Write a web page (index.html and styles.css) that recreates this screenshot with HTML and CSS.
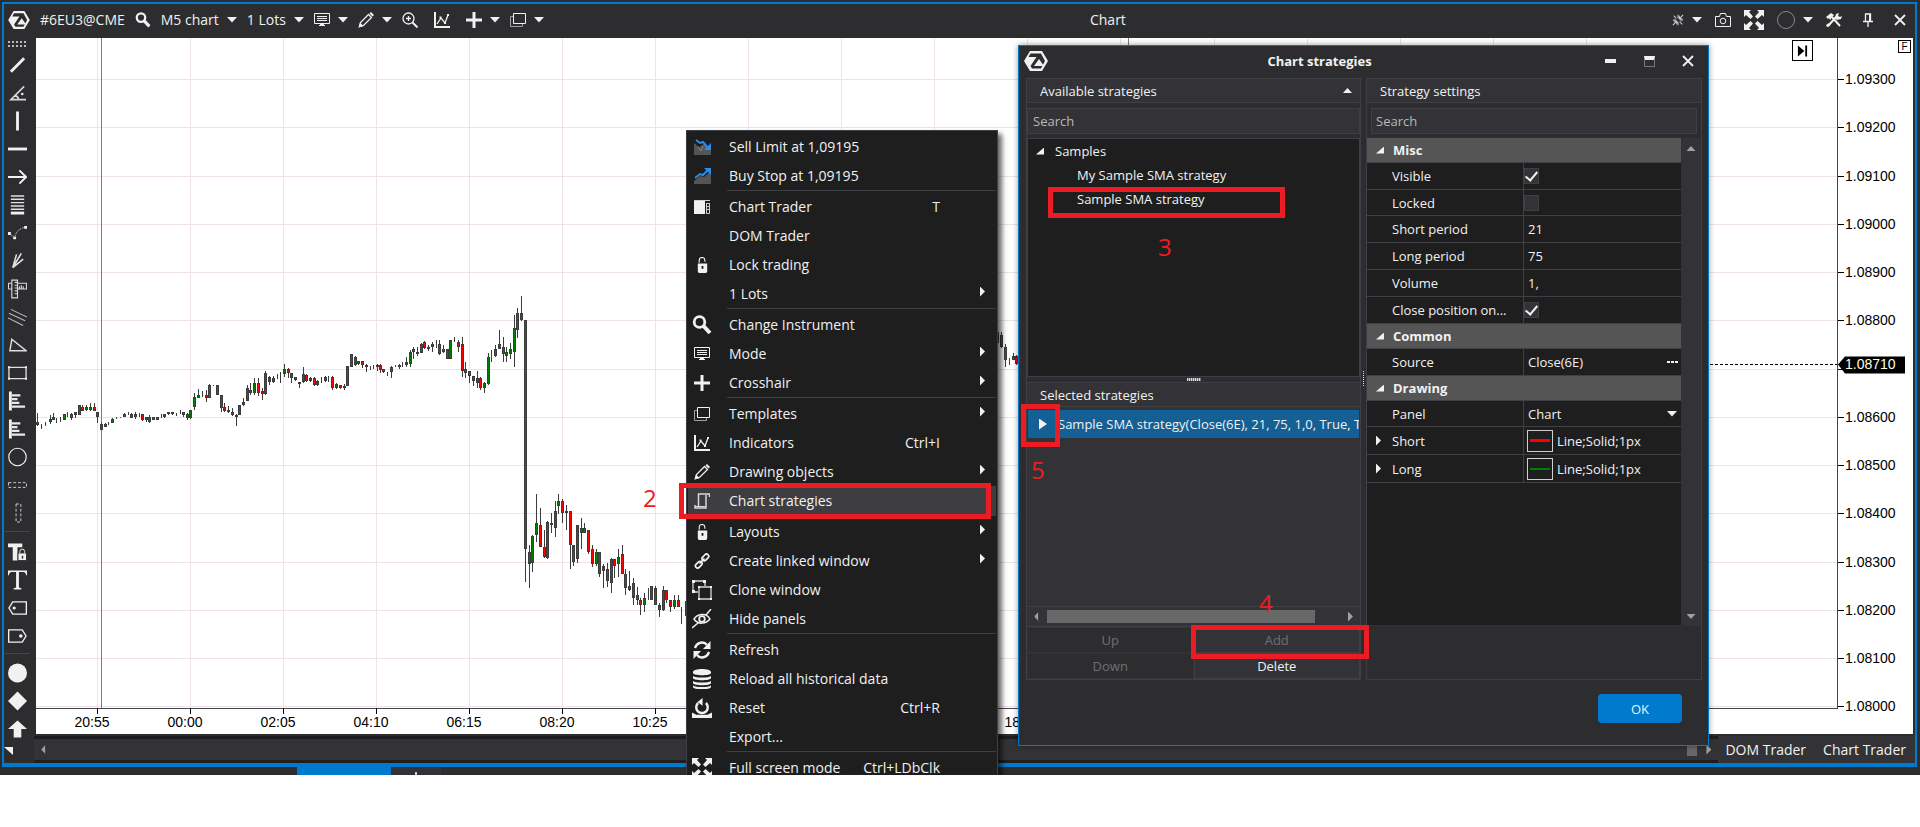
FILE: index.html
```html
<!DOCTYPE html>
<html lang="en">
<head>
<meta charset="utf-8">
<title>Chart</title>
<link rel="stylesheet" href="styles.css">
</head>
<body>
<svg class="sprite" aria-hidden="true">
  <symbol id="i-logo" viewBox="0 0 24 20"><path fill="#f1f1f1" d="M6 0h12l6 10-6 10H6L0 10z"/><path fill="#2d2d30" d="M6.500 2.500h10.500L21 10l-4 7.500H8l-1.500-2.500L12.500 6H4.500z"/><path fill="#f1f1f1" d="M15 8l5 7H10z"/></symbol>
  <symbol id="i-search" viewBox="0 0 20 20"><circle cx="7.500" cy="7" r="5.300" fill="none" stroke="#f1f1f1" stroke-width="2.800"/><path d="M11.500 11l6.500 7" stroke="#f1f1f1" stroke-width="4"/></symbol>
  <symbol id="i-down" viewBox="0 0 10 6"><path fill="#f1f1f1" d="M0 0h10L5 5.500z"/></symbol>
  <symbol id="i-monitor" viewBox="0 0 16 14"><path fill="none" stroke="#f1f1f1" d="M.5.500h15v10H.5z"/><path stroke="#f1f1f1" d="M3 3.500h10M3 5.500h10M3 7.500h10M5 12.500h6"/><path fill="#f1f1f1" d="M6 11h4v2H6z"/></symbol>
  <symbol id="i-pencil" viewBox="0 0 16 16"><path fill="none" stroke="#f1f1f1" stroke-width="1.300" d="M1.500 14.500l1-4L10.500 2.500l3 3L5.500 13.500z"/><path fill="#f1f1f1" d="M.5 15.500l1.500-5 3.500 3.500zM11.500 1.500L13 0l3 3-1.500 1.500z"/></symbol>
  <symbol id="i-zoom" viewBox="0 0 16 16"><circle cx="6.500" cy="6.500" r="5.500" fill="none" stroke="#f1f1f1" stroke-width="1.300"/><path d="M10.500 10.500l5 5" stroke="#f1f1f1" stroke-width="2"/><path d="M4 6.500h5M6.500 4v5" stroke="#f1f1f1" stroke-width="1.300"/></symbol>
  <symbol id="i-graph" viewBox="0 0 16 16"><path d="M1 0v15h15" fill="none" stroke="#f1f1f1" stroke-width="2"/><path d="M3 12l4-6 4 5 3-8" fill="none" stroke="#f1f1f1" stroke-width="1.300"/><path d="M5.500 4.500h2v2h-2zM10 10h2v2h-2zM13 2h2v2h-2z" fill="#f1f1f1"/></symbol>
  <symbol id="i-plus" viewBox="0 0 16 16"><path d="M8 0v16M0 8h16" stroke="#f1f1f1" stroke-width="3"/></symbol>
  <symbol id="i-pages" viewBox="0 0 16 14"><path fill="none" stroke="#f1f1f1" d="M3.500.500h12v10h-12z"/><path fill="none" stroke="#a0a0a0" d="M3 3.500H.5v10h12V11"/></symbol>
  <symbol id="i-collapse" viewBox="0 0 14 14"><path stroke="#d0d0d0" stroke-width="1.200" fill="none" d="M1 13l4-4M13 1L9 5M2 2l3 3M12 12L9 9M7 1v4M7 9v4M1 7h4M9 7h4M5.500 12V8.500H2M8.500 2v3.500H12"/></symbol>
  <symbol id="i-camera" viewBox="0 0 16 14"><path fill="none" stroke="#f1f1f1" d="M.5 3.500h4l1-3h5l1 3h4v10H.5z"/><circle cx="8" cy="8" r="2.800" fill="none" stroke="#f1f1f1"/></symbol>
  <symbol id="i-expand" viewBox="0 0 20 20"><path fill="#f1f1f1" d="M0 0h7L5 2l4 4.500L6.500 9 2 5 0 7zM20 0v7l-2-2-4.500 4L11 6.500 15 2l-2-2zM0 20v-7l2 2 4.500-4L9 13.500 5 18l2 2zM20 20h-7l2-2-4-4.500 2.500-2.500 4.500 4 2-2z"/></symbol>
  <symbol id="i-ring" viewBox="0 0 18 18"><circle cx="9" cy="9" r="8.500" fill="none" stroke="#8a8a8a"/></symbol>
  <symbol id="i-tools" viewBox="0 0 16 14"><path stroke="#f1f1f1" stroke-width="2" d="M2 13l9-10M6 4l8 9"/><path fill="#f1f1f1" d="M0 4l5-4 3 2-4 5-1-2-1 1zM10 1l3-1-1 3 2 1 2-1-1 3-4 1-2-2zM0 12l3-2 1 3-3 1z"/></symbol>
  <symbol id="i-pin" viewBox="0 0 10 14"><path fill="none" stroke="#f1f1f1" stroke-width="1.300" d="M2.500 8V1h5v7M0 8.500h10M5 9v5"/><path stroke="#f1f1f1" stroke-width="2" d="M7 1v7"/></symbol>
  <symbol id="i-close" viewBox="0 0 12 12"><path stroke="#f1f1f1" stroke-width="1.800" d="M1 1l10 10M11 1L1 11"/></symbol>
  <symbol id="i-lock" viewBox="0 0 12 17"><path fill="none" stroke="#f1f1f1" stroke-width="1.200" d="M2.500 6V3.500a3 3 0 016 0V5"/><path fill="#f1f1f1" fill-rule="evenodd" d="M1 7h10v8.500L10 17H2l-1-1.500zM5 9.500v3h2v-3z"/></symbol>
  <symbol id="i-panel" viewBox="0 0 16 14"><path fill="#f1f1f1" d="M0 1h11v13H0z"/><path stroke="#d0d0d0" fill="none" d="M0 .5h16M12 3.500h4M12.500 3v10.500h3V3M13 6.500h3M13 9.500h3"/></symbol>
  <symbol id="i-fall" viewBox="0 0 17 16"><path fill="#555" d="M0 4l5 4 5-3 7 5v6H0z"/><path stroke="#999" stroke-width=".7" fill="none" d="M4 8l3 4 2-5"/><path fill="none" stroke="#2d8ceb" stroke-width="2" d="M2 1l4 3 3-1 5 6"/><path fill="#2d8ceb" d="M17 4v7h-7z"/></symbol>
  <symbol id="i-rise" viewBox="0 0 17 16"><path fill="#555" d="M0 13l6-5 4 1 7-6v13H0z"/><path fill="none" stroke="#2d8ceb" stroke-width="2" d="M1 10l5-4 3 1 5-5"/><path fill="#2d8ceb" d="M10 0h7v7z"/></symbol>
  <symbol id="i-scroll" viewBox="0 0 16 16"><path fill="none" stroke="#d8d8d8" stroke-width="1.500" d="M15.500 4V1H4.500v12.500M1 12v3h11V2"/><path fill="none" stroke="#d8d8d8" d="M1 13.500h10"/></symbol>
  <symbol id="i-link" viewBox="0 0 16 16"><g fill="none" stroke="#f1f1f1" stroke-width="1.700"><rect x="-3.800" y="-2" width="7.600" height="4.400" rx="2.200" transform="translate(4.600 11.600) rotate(-45)"/><rect x="-3.800" y="-2.400" width="7.600" height="4.400" rx="2.200" transform="translate(11.500 4.600) rotate(-45)"/><path d="M5.500 10.500l5-5"/></g></symbol>
  <symbol id="i-clone" viewBox="0 0 20 20"><path fill="none" stroke="#d8d8d8" stroke-width="1.300" d="M6 12H1V1h12v5M7 7h12v12H7z"/><path fill="#f1f1f1" d="M0 0h3v3H0zM11 0h3v3h-3zM0 10h3v3H0zM6 6h2v2H6zM18 6h2v2h-2zM6 18h2v2H6zM18 18h2v2h-2z"/></symbol>
  <symbol id="i-eye" viewBox="0 0 20 20"><path fill="none" stroke="#f1f1f1" stroke-width="1.500" d="M2 10c3-5 12-7 16 0-4 5-12 6-16 0zM0 19l6-5M14 6l5-6"/><circle cx="10" cy="10" r="2.800" fill="none" stroke="#f1f1f1" stroke-width="1.800"/></symbol>
  <symbol id="i-refresh" viewBox="0 0 18 18"><path fill="none" stroke="#f1f1f1" stroke-width="2.400" d="M2 7c2-6 9-7 12-3M16 11c-2 6-9 7-12 3"/><path fill="#f1f1f1" d="M17.500 0v8H10zM.5 18v-8H8z"/></symbol>
  <symbol id="i-db" viewBox="0 0 18 20"><path fill="#f1f1f1" d="M0 3c0-4 18-4 18 0v1c0 3-18 3-18 0zM0 7c3 2 15 2 18 0v2c0 3-18 3-18 0zM0 12c3 2 15 2 18 0v2c0 3-18 3-18 0zM0 16.500c3 2 15 2 18 0V18c0 3-18 3-18 0z"/></symbol>
  <symbol id="i-reset" viewBox="0 0 18 18"><path fill="none" stroke="#f1f1f1" stroke-width="2.200" d="M5.500 4.500a5.200 5.200 0 107 0"/><path fill="#f1f1f1" d="M9.500 0v7L5 3.500zM0 13l4 2h10l4-2v5H0z"/></symbol>
  <symbol id="r-line" viewBox="0 0 20 20"><path d="M3 17L17 3" stroke="#f1f1f1" stroke-width="3"/></symbol>
  <symbol id="r-angle" viewBox="0 0 20 20"><path d="M17 3L3 17h16M7 13c3 0 4 2 4 4" fill="none" stroke="#d8d8d8" stroke-width="1.700"/><circle cx="15" cy="11" r="1.300" fill="#f1f1f1"/></symbol>
  <symbol id="r-v" viewBox="0 0 20 20"><path d="M10 0v20" stroke="#f1f1f1" stroke-width="3"/></symbol>
  <symbol id="r-h" viewBox="0 0 20 20"><path d="M0 10h20" stroke="#f1f1f1" stroke-width="3"/></symbol>
  <symbol id="r-arrow" viewBox="0 0 20 20"><path d="M0 10h18M12 3l7 7-7 7" fill="none" stroke="#f1f1f1" stroke-width="2"/></symbol>
  <symbol id="r-fib" viewBox="0 0 20 20"><path d="M3 .5h14M3 4h14M3 7.500h14M3 11h14M3 14.500h14" stroke="#e0e0e0" stroke-width="1.500"/><path d="M3 18.500h14" stroke="#f1f1f1" stroke-width="3"/></symbol>
  <symbol id="r-curve" viewBox="0 0 20 20"><path d="M1 10l6 5c1-6 5-10 11-11" fill="none" stroke="#bbb" stroke-dasharray="2 1"/><path d="M0 9h3v3H0zM5.500 14h3v2.500h-3zM17 2.500h3v3h-3z" fill="#f1f1f1"/></symbol>
  <symbol id="r-fan" viewBox="0 0 20 20"><path d="M5 17L9 3M5 17l9-15M5 17l11-9" stroke="#e0e0e0" stroke-width="1.700"/></symbol>
  <symbol id="r-ruler" viewBox="0 0 20 20"><path d="M4 .7h6v18.600H4zM10 4h9.500v6H10M4 4H.5v6H4M7 3h3M7 6h3M7 9h3M7 12h3M7 15h3M12 7v3M14 6v4M16 7v3" fill="none" stroke="#d8d8d8" stroke-width="1.200"/></symbol>
  <symbol id="r-chan" viewBox="0 0 20 20"><path d="M3 2l17 8M1 6l17 8M0 11l16 8" stroke="#bbb" stroke-width="1.100"/></symbol>
  <symbol id="r-tri" viewBox="0 0 20 20"><path d="M4 4l15 12H2z" fill="none" stroke="#e0e0e0" stroke-width="1.500"/></symbol>
  <symbol id="r-rect" viewBox="0 0 20 20"><path d="M1 4h18v12H1z" fill="none" stroke="#e0e0e0" stroke-width="1.400"/><path d="M0 3h2v2H0zM18 3h2v2h-2zM0 15h2v2H0zM18 15h2v2h-2z" fill="#f1f1f1"/></symbol>
  <symbol id="r-prof" viewBox="0 0 20 20"><path d="M2.500 0v20" stroke="#f1f1f1" stroke-width="3"/><path d="M4 4h9M4 8h6M4 12h8M4 16h14" stroke="#e8e8e8" stroke-width="2.400"/></symbol>
  <symbol id="r-ring" viewBox="0 0 20 20"><circle cx="10" cy="10" r="9.200" fill="none" stroke="#f1f1f1" stroke-width="1.200"/></symbol>
  <symbol id="r-dh" viewBox="0 0 20 20"><path d="M.5 7.500h19v5H.5z" fill="none" stroke="#d0d0d0" stroke-dasharray="3 2"/></symbol>
  <symbol id="r-dv" viewBox="0 0 20 20"><path d="M8.500.500h5v19h-5z" fill="none" stroke="#d0d0d0" stroke-dasharray="3 2"/></symbol>
  <symbol id="r-tlock" viewBox="0 0 20 20"><path d="M0 1h15v4H10v14H5V5H0z" fill="#f1f1f1"/><path d="M10.500 11h9v8h-9z" fill="#f1f1f1" stroke="#2d2d30"/><path d="M12.500 11V9.500a2.500 2.500 0 015 0V11" fill="none" stroke="#f1f1f1"/><path d="M14.500 14h1.500v3h-1.500z" fill="#2d2d30"/></symbol>
  <symbol id="r-t" viewBox="0 0 20 20"><path d="M0 0h20v5h-1c0-2-1-3.500-3-3.500h-4.500V18l2.500.8V20H6v-1.200l2.500-.8V1.500H4C2 1.500 1 3 1 5H0z" fill="#f1f1f1"/></symbol>
  <symbol id="r-tagl" viewBox="0 0 20 20"><path d="M5 3.500h14.300v13H5L1 10z" fill="none" stroke="#f1f1f1" stroke-width="1.400"/><circle cx="6.500" cy="10" r="1.700" fill="#f1f1f1"/></symbol>
  <symbol id="r-tagr" viewBox="0 0 20 20"><path d="M15 3.500H.7v13H15l4-6.500z" fill="none" stroke="#f1f1f1" stroke-width="1.400"/><circle cx="13.500" cy="10" r="1.900" fill="#f1f1f1"/></symbol>
  <symbol id="r-dot" viewBox="0 0 20 20"><circle cx="10" cy="10" r="10" fill="#f1f1f1"/></symbol>
  <symbol id="r-dia" viewBox="0 0 20 20"><path d="M10 0l10 10-10 10L0 10z" fill="#f1f1f1"/></symbol>
  <symbol id="r-up" viewBox="0 0 20 20"><path d="M10 1l10 9h-6v9H6v-9H0z" fill="#f1f1f1"/></symbol>
</svg>

<div class="app">
  <div class="frame">
    <header class="titlebar">
      <div class="tools">
        <svg class="ic logo"><use href="#i-logo"/></svg>
        <span class="symbol">#6EU3@CME</span>
        <button class="tb" aria-label="Find instrument"><svg class="ic s16"><use href="#i-search"/></svg></button>
        <button class="tb wide">M5 chart<svg class="caret"><use href="#i-down"/></svg></button>
        <button class="tb wide">1 Lots<svg class="caret"><use href="#i-down"/></svg></button>
        <button class="tb" aria-label="Mode"><svg class="ic s16"><use href="#i-monitor"/></svg><svg class="caret"><use href="#i-down"/></svg></button>
        <button class="tb" aria-label="Draw"><svg class="ic s16"><use href="#i-pencil"/></svg><svg class="caret"><use href="#i-down"/></svg></button>
        <button class="tb" aria-label="Zoom"><svg class="ic s16"><use href="#i-zoom"/></svg></button>
        <button class="tb gap" aria-label="Indicators"><svg class="ic s16"><use href="#i-graph"/></svg></button>
        <button class="tb gap" aria-label="Crosshair"><svg class="ic s16"><use href="#i-plus"/></svg><svg class="caret"><use href="#i-down"/></svg></button>
        <button class="tb" aria-label="Templates"><svg class="ic s16"><use href="#i-pages"/></svg><svg class="caret"><use href="#i-down"/></svg></button>
      </div>
      <h1 class="title">Chart</h1>
      <div class="tools right">
        <button class="tb" aria-label="Collapse"><svg class="ic s12"><use href="#i-collapse"/></svg><svg class="caret"><use href="#i-down"/></svg></button>
        <button class="tb" aria-label="Snapshot"><svg class="ic s16"><use href="#i-camera"/></svg></button>
        <button class="tb" aria-label="Full screen"><svg class="ic s20"><use href="#i-expand"/></svg></button>
        <button class="tb" aria-label="Colour"><svg class="ic s18"><use href="#i-ring"/></svg><svg class="caret"><use href="#i-down"/></svg></button>
        <button class="tb" aria-label="Settings"><svg class="ic s16"><use href="#i-tools"/></svg></button>
        <button class="tb far" aria-label="Pin"><svg class="ic s14"><use href="#i-pin"/></svg></button>
        <button class="tb far" aria-label="Close"><svg class="ic s12"><use href="#i-close"/></svg></button>
      </div>
    </header>

    <div class="main">
      <nav class="rail" id="rail" aria-label="Drawing tools"></nav>
      <div class="work">
        <div class="chart">
          <svg class="plot" id="plot" role="img" aria-label="Price chart"></svg>
          <svg class="axis" id="axis" role="img" aria-label="Price scale"></svg>
          <button class="jump" aria-label="Go to last bar"><svg viewBox="0 0 12 12"><path d="M1 0l7 6-7 6zM9 0h2v12H9z"/></svg></button>
          <button class="fix">F</button>
        </div>
        <div class="foot">
          <div class="hscroll"><span class="tri left"></span><span class="hthumb"></span><span class="tri rightward"></span></div>
          <div class="tabs"><button>DOM Trader</button><button>Chart Trader</button></div>
        </div>
      </div>
    </div>
  </div>
  <div class="strip"><span class="active"></span><span class="new"></span></div>

  <menu class="ctx">
    <li><button><svg class="m17"><use href="#i-fall"/></svg><span>Sell Limit at 1,09195</span></button></li>
    <li><button><svg class="m17"><use href="#i-rise"/></svg><span>Buy Stop at 1,09195</span></button></li>
    <li class="sep"></li>
    <li><button><svg class="m16"><use href="#i-panel"/></svg><span>Chart Trader</span><kbd>T</kbd></button></li>
    <li><button><i></i><span>DOM Trader</span></button></li>
    <li><button><svg class="m17"><use href="#i-lock"/></svg><span>Lock trading</span></button></li>
    <li><button><i></i><span>1 Lots</span><b></b></button></li>
    <li class="sep"></li>
    <li><button><svg class="m20"><use href="#i-search"/></svg><span>Change Instrument</span></button></li>
    <li><button><svg class="m16"><use href="#i-monitor"/></svg><span>Mode</span><b></b></button></li>
    <li><button><svg class="m16"><use href="#i-plus"/></svg><span>Crosshair</span><b></b></button></li>
    <li class="sep"></li>
    <li><button><svg class="m16"><use href="#i-pages"/></svg><span>Templates</span><b></b></button></li>
    <li><button><svg class="m16"><use href="#i-graph"/></svg><span>Indicators</span><kbd>Ctrl+I</kbd></button></li>
    <li><button><svg class="m16"><use href="#i-pencil"/></svg><span>Drawing objects</span><b></b></button></li>
    <li><button class="hot"><svg class="m16"><use href="#i-scroll"/></svg><span>Chart strategies</span></button></li>
    <li class="sep"></li>
    <li><button><svg class="m17"><use href="#i-lock"/></svg><span>Layouts</span><b></b></button></li>
    <li><button><svg class="m16"><use href="#i-link"/></svg><span>Create linked window</span><b></b></button></li>
    <li><button><svg class="m20"><use href="#i-clone"/></svg><span>Clone window</span></button></li>
    <li><button><svg class="m20"><use href="#i-eye"/></svg><span>Hide panels</span></button></li>
    <li class="sep"></li>
    <li><button><svg class="m18"><use href="#i-refresh"/></svg><span>Refresh</span></button></li>
    <li><button><svg class="m20"><use href="#i-db"/></svg><span>Reload all historical data</span></button></li>
    <li><button><svg class="m20"><use href="#i-reset"/></svg><span>Reset</span><kbd>Ctrl+R</kbd></button></li>
    <li><button><i></i><span>Export...</span></button></li>
    <li class="sep"></li>
    <li><button><svg class="m20"><use href="#i-expand"/></svg><span>Full screen mode</span><kbd>Ctrl+LDbClk</kbd></button></li>
  </menu>

  <section class="dialog" role="dialog" aria-labelledby="dlg-title">
    <header class="dlg-bar">
      <svg class="dlg-logo"><use href="#i-logo"/></svg>
      <h2 id="dlg-title">Chart strategies</h2>
      <div class="win">
        <button aria-label="Minimize"><span class="min"></span></button>
        <button aria-label="Maximize"><span class="max"></span></button>
        <button aria-label="Close"><svg class="s12"><use href="#i-close"/></svg></button>
      </div>
    </header>
    <div class="cols">
      <div class="left">
        <div class="head"><span>Available strategies</span><span class="tri up"></span></div>
        <input class="search" type="text" placeholder="Search" aria-label="Search strategies">
        <ul class="tree">
          <li class="root"><span class="corner"></span>Samples</li>
          <li>My Sample SMA strategy</li>
          <li>Sample SMA strategy</li>
        </ul>
        <div class="grip"><span></span></div>
        <div class="selected">
          <div class="head sub"><span>Selected strategies</span></div>
          <div class="entry"><button aria-label="Start strategy"><span class="play"></span></button><span>Sample SMA strategy(Close(6E), 21, 75, 1,0, True, T</span></div>
          <div class="space"></div>
          <div class="list-scroll"><span class="tri left"></span><span class="thumb"></span><span class="tri rightward"></span></div>
          <div class="cmds">
            <button disabled>Up</button><button disabled class="raised">Add</button>
            <button disabled>Down</button><button class="raised">Delete</button>
          </div>
        </div>
      </div>
      <div class="settings">
        <div class="head"><span>Strategy settings</span></div>
        <input class="search inset" type="text" placeholder="Search" aria-label="Search settings">
        <div class="grid-wrap">
          <div class="grid">
            <div class="cat"><span class="corner"></span>Misc</div>
            <div class="prop"><label for="p1">Visible</label><div><input type="checkbox" id="p1" checked></div></div>
            <div class="prop tight"><label for="p2">Locked</label><div><input type="checkbox" id="p2"></div></div>
            <div class="prop"><label for="p3">Short period</label><div><input type="text" id="p3" value="21"></div></div>
            <div class="prop"><label for="p4">Long period</label><div><input type="text" id="p4" value="75"></div></div>
            <div class="prop"><label for="p5">Volume</label><div><input type="text" id="p5" value="1,"></div></div>
            <div class="prop"><label for="p6">Close position on...</label><div><input type="checkbox" id="p6" checked></div></div>
            <div class="cat"><span class="corner"></span>Common</div>
            <div class="prop"><label for="p7">Source</label><div><input type="text" id="p7" value="Close(6E)"><button class="more" aria-label="Choose source"><span></span><span></span><span></span></button></div></div>
            <div class="cat"><span class="corner"></span>Drawing</div>
            <div class="prop tight"><label for="p8">Panel</label><div class="pick"><select id="p8"><option>Chart</option></select><svg class="caret"><use href="#i-down"/></svg></div></div>
            <div class="prop tall"><span class="tri open"></span><span class="name">Short</span><div><span class="swatch red"></span>Line;Solid;1px</div></div>
            <div class="prop tall"><span class="tri open"></span><span class="name">Long</span><div><span class="swatch green"></span>Line;Solid;1px</div></div>
          </div>
          <div class="vscroll"><span class="tri up"></span><span class="tri down"></span></div>
        </div>
        <div class="desc"></div>
      </div>
      <span class="side-grip"></span>
    </div>
    <footer class="dlg-foot"><button class="ok">OK</button></footer>
  </section>

  <div class="box box-menu"></div><span class="num num-menu">2</span>
  <div class="box box-tree"></div><span class="num num-tree">3</span>
  <div class="box box-add"></div><span class="num num-add">4</span>
  <div class="box box-play"></div><span class="num num-play">5</span>
</div>
<script src="chart.js"></script>
</body>
</html>
```
FILE: styles.css
```css
* { box-sizing: border-box; }
body { margin: 0; background: #fff; font: 14px/20px "Open Sans", "Noto Sans", sans-serif; color: #f1f1f1; }
button, input, select { font: inherit; color: inherit; background: none; border: 0; padding: 0; margin: 0; }
svg, span { flex-shrink: 0; }
.sprite { display: none; }

.app { position: relative; overflow: hidden; background: #2d2d30; padding: 2px 3px 0 2px; }
.frame { border: 2px solid #007acc; border-bottom-width: 4px; }

.titlebar { display: flex; align-items: center; height: 34px; padding: 0 9px 2px 4px; }
.title { flex: 1; text-align: center; font-size: 14px; font-weight: 400; margin: 0; }
.tools { display: flex; align-items: center; gap: 10px; }
.tools.right { gap: 13px; }
.tb { display: flex; align-items: center; gap: 8px; white-space: nowrap; }
.tb.gap { margin-left: 6px; }
.tb.far { margin-left: 8px; }
.logo { width: 22px; height: 18px; }
.s12 { width: 12px; height: 12px; }
.s14 { width: 10px; height: 14px; }
.s16 { width: 16px; height: 16px; }
.s18 { width: 18px; height: 18px; }
.s20 { width: 20px; height: 20px; }
.caret { width: 10px; height: 6px; }

.main { display: flex; }
.rail { width: 30px; flex: none; display: flex; flex-direction: column; align-items: center; padding-right: 4px; }
.rail .dots { width: 20px; height: 7px; margin: 2px 0 4px; background: radial-gradient(circle, #bbb 1px, transparent 1px) 0 0 / 4px 4px; }
.rail button { height: 28px; display: flex; align-items: center; }
.rail svg { width: 19px; height: 20px; }
.rail hr { width: 25px; margin: 4px 0 6px; border: 0; border-top: 1px solid #46464a; }
.rail hr.last { margin: 3px 0 5px; }
.rail .fold { align-self: flex-start; width: 9px; height: 8px; margin-top: 4px; background: #f1f1f1; clip-path: polygon(0 0, 100% 0, 100% 100%); }

.work { flex: 1; min-width: 0; }
.chart { position: relative; display: flex; margin: 0 2px; background: #fff; }
.plot { flex: 1; min-width: 0; height: 696px; }
.axis { width: 76px; height: 696px; }
.plot text, .axis text { font: 14px "Liberation Sans", Arial, sans-serif; fill: #000; }
.axis .now { fill: #ffffe1; }
.jump { position: absolute; right: 100px; top: 2px; width: 21px; height: 21px; border: 1px solid #000; display: grid; place-items: center; }
.jump svg { width: 11px; height: 12px; }
.fix { position: absolute; right: 2px; top: 2px; width: 13px; height: 13px; border: 1px solid #000; color: #000; font: 10px/11px "Liberation Sans", sans-serif; }

.foot { display: flex; padding-top: 2px; }
.hscroll { flex: 1; display: flex; align-items: center; height: 27px; padding: 0 7px; border: solid #1e1e1e; border-width: 3px 0; background: #333337; }
.hthumb { width: 10px; height: 12px; margin-left: auto; margin-right: 9px; background: #686868; }
.tabs { display: flex; gap: 17px; padding: 0 9px 0 7px; background: #333337; }
.strip { display: flex; height: 8px; padding-left: 295px; }
.strip .active { width: 94px; background: #007acc; }
.strip .new { width: 50px; background: linear-gradient(#ccc, #ccc) 24px 5px / 2px 3px no-repeat #333337; }

.tri { width: 5px; height: 10px; background: #a0a0a0; }
.tri.left { clip-path: polygon(100% 0, 100% 100%, 0 50%); }
.tri.rightward, .tri.open { clip-path: polygon(0 0, 100% 50%, 0 100%); }
.tri.up { width: 9px; height: 5px; clip-path: polygon(50% 0, 100% 100%, 0 100%); }
.tri.down { width: 9px; height: 5px; clip-path: polygon(0 0, 100% 0, 50% 100%); }

.ctx { position: absolute; left: 686px; top: 130px; width: 312px; margin: 0; padding: 1px; list-style: none; background: #1e1e1e; border: 1px solid #3f3f46; box-shadow: 4px 4px 5px rgba(0, 0, 0, .6); }
.ctx button { display: grid; grid-template-columns: 28px 13px auto 1fr 56px; align-items: center; width: 100%; height: 29px; text-align: left; }
.ctx svg, .ctx i { grid-column: 1; justify-self: center; height: 16px; }
.ctx span { grid-column: 3; white-space: nowrap; }
.ctx kbd { grid-column: 4; justify-self: end; font: inherit; }
.ctx b { grid-column: 5; justify-self: end; width: 5px; height: 10px; margin: 0 11px 4px 0; background: #f1f1f1; clip-path: polygon(0 0, 100% 50%, 0 100%); }
.ctx .m16 { width: 16px; }
.ctx .m17 { width: 17px; }
.ctx .m18 { width: 18px; height: 18px; }
.ctx .m20 { width: 20px; height: 20px; }
.ctx .sep { height: 2px; margin-left: 39px; border-top: 1px solid #3f3f46; }
.ctx .hot { background: #3e3e42; }

.dialog { position: absolute; left: 1018px; top: 45px; width: 691px; border: 1px solid #007acc; background: #2d2d30; font-size: 13px; box-shadow: 0 0 6px rgba(0, 0, 0, .4); }
.dlg-bar { display: flex; align-items: center; height: 32px; padding: 0 14px 2px 5px; }
.dlg-logo { width: 24px; height: 20px; }
.dlg-bar h2 { flex: 1; margin: 0; padding-right: 13px; text-align: center; font-size: 13px; font-weight: 700; }
.win { display: flex; gap: 27px; }
.win button { width: 12px; height: 12px; display: grid; place-items: center; }
.min { width: 11px; height: 4px; background: #f1f1f1; }
.max { width: 11px; height: 11px; border: 1px solid #777; border-top: 4px solid #f1f1f1; }
.cols { position: relative; display: grid; grid-template-columns: 335px 336px; gap: 5px; padding: 0 7px; }
.left, .settings { min-width: 0; border: 1px solid #3f3f46; }
.settings { display: flex; flex-direction: column; }
.left { display: flex; flex-direction: column; }
.head { display: flex; align-items: center; justify-content: space-between; height: 24px; padding: 0 8px 0 13px; background: #333337; border-bottom: 1px solid #3f3f46; }
.head .tri { background: #f1f1f1; }
.search { height: 26px; margin: 5px 0 4px; padding: 0 5px; border: 1px solid #3f3f46; background: #333337; }
.search.inset { margin: 5px 4px 4px; padding: 0 4px; }
.search::placeholder { color: #b8b8b8; opacity: 1; }
.tree { height: 239px; margin: 0; padding: 0; list-style: none; background: #1e1e1e; border: 1px solid #3f3f46; }
.tree li { height: 24px; line-height: 24px; padding-left: 49px; }
.tree .root { display: flex; align-items: center; gap: 11px; padding-left: 8px; }
.corner { width: 8px; height: 7px; background: #f1f1f1; clip-path: polygon(100% 0, 100% 100%, 0 100%); }
.grip { height: 5px; display: grid; place-items: center; }
.grip span { width: 14px; height: 3px; background: repeating-linear-gradient(90deg, #ddd 0 1px, #777 1px 2px); }
.side-grip { position: absolute; left: 344px; top: 293px; width: 1px; height: 15px; background: repeating-linear-gradient(#ddd 0 1px, #2d2d30 1px 2px); }
.selected { background: #333337; border-top: 1px solid #3f3f46; }
.entry { display: flex; align-items: center; height: 28px; margin: 3px 1px 0; overflow: hidden; white-space: nowrap; background: #146095; }
.entry button { flex: none; width: 30px; height: 28px; display: grid; place-items: center; }
.play { width: 8px; height: 11px; background: #f1f1f1; clip-path: polygon(0 0, 100% 50%, 0 100%); }
.space { height: 168px; }
.list-scroll { display: flex; align-items: center; height: 21px; padding: 0 7px; border-top: 1px solid #3f3f46; border-bottom: 1px solid #3f3f46; }
.list-scroll .thumb { width: 268px; height: 13px; margin: 0 auto 0 8px; background: #686868; }
.cmds { display: grid; grid-template-columns: 1fr 1fr; grid-auto-rows: 26px; background: #2d2d30; }
.cmds button { border: 1px solid #333337; }
.cmds button:disabled { color: #6f6f73; }
.cmds .raised { background: #333337; border-color: #3f3f46; }

.grid-wrap { display: flex; flex: 1; min-width: 0; }
.grid { flex: 1; min-width: 0; background: #1e1e1e; }
.cat { display: flex; align-items: center; gap: 9px; height: 25px; padding-left: 9px; background: #555; border-bottom: 1px solid #3f3f46; font-weight: 700; }
.prop { position: relative; display: grid; grid-template-columns: 156px minmax(0, 1fr); height: 27px; border-bottom: 1px solid #3f3f46; }
.prop.tight { height: 26px; }
.prop.tall { height: 28px; }
.prop label, .prop .name { padding-left: 25px; align-self: center; white-space: nowrap; overflow: hidden; grid-column: 1; grid-row: 1; }
.prop > div { display: flex; align-items: center; border-left: 1px solid #3f3f46; grid-column: 2; grid-row: 1; }
.prop .open { grid-column: 1; grid-row: 1; align-self: center; margin-left: 9px; background: #f1f1f1; }
.prop input[type="text"] { flex: 1; min-width: 0; padding-left: 4px; }
.prop select { flex: 1; padding-left: 4px; appearance: none; }
.prop .caret { margin-right: 4px; }
.prop input[type="checkbox"] { appearance: none; width: 15px; height: 16px; background: #333337; border: 1px solid #3f3f46; display: grid; place-items: center; }
.prop input[type="checkbox"]:checked::after { content: ""; width: 5px; height: 10px; border: solid #f1f1f1; border-width: 0 2px 2px 0; transform: translateY(-1px) rotate(40deg); }
.more { display: flex; gap: 1px; padding-right: 3px; }
.more span { width: 3px; height: 2px; background: #f1f1f1; }
.swatch { width: 26px; height: 22px; margin: 0 4px 0 3px; border: 1px solid #d0d0d0; }
.red { background: linear-gradient(#f00, #f00) 2px 8px / 20px 3px no-repeat; }
.green { background: linear-gradient(#008000, #008000) 2px 9px / 20px 2px no-repeat; }
.vscroll { flex: none; display: flex; flex-direction: column; justify-content: space-between; align-items: center; width: 20px; padding: 8px 0 6px; background: #333337; }
.desc { height: 54px; border-top: 1px solid #333337; }
.dlg-foot { display: flex; justify-content: flex-end; padding: 14px 26px 22px; }
.ok { width: 84px; height: 29px; border-radius: 4px; background: #007acc; }

.box { position: absolute; border: 5px solid #ed1c24; }
.num { position: absolute; font-size: 24px; line-height: 24px; color: #ed1c24; }
.box-menu { left: 679px; top: 483px; width: 312px; height: 36px; }
.num-menu { left: 643px; top: 486px; }
.box-tree { left: 1048px; top: 187px; width: 237px; height: 31px; }
.num-tree { left: 1158px; top: 235px; }
.box-add { left: 1191px; top: 625px; width: 178px; height: 34px; }
.num-add { left: 1259px; top: 591px; }
.box-play { left: 1021px; top: 404px; width: 39px; height: 43px; }
.num-play { left: 1031px; top: 458px; }
```
FILE: chart.js
```javascript
// Drawing tool rail
const tools = ["line","angle","v","h","arrow","fib","curve","fan","ruler","chan","tri","rect","prof","prof","ring","dh","dv","-","tlock","t","tagl","tagr","--","dot","dia","up"];
document.getElementById("rail").innerHTML = '<span class="dots"></span>' + tools.map(t =>
  t === "-" ? "<hr>" : t === "--" ? '<hr class="last">' :
  `<button aria-label="${t}"><svg><use href="#r-${t}"/></svg></button>`).join("") + '<span class="fold"></span>';

// Window coordinates of the plot's origin
const OX = 36, OY = 38;
const BASE = 708;
const gridX = [97,190,283,376,469,562,655,748,841,934,1027,1120,1214,1307,1400,1493,1586];
const times = ["20:55","00:00","02:05","04:10","06:15","08:20","10:25","12:30","14:35","16:40","18:45"];
const gridY = [79,127,176,224,272,320,369,417,465,513,562,610,658,706];

let s = `<g transform="translate(${-OX} ${-OY})" shape-rendering="crispEdges">`;
gridY.forEach(y => s += `<path d="M${OX} ${y}.5H4000" stroke="#efe2e6"/>`);
gridX.forEach(x => s += `<path d="M${x}.500 ${OY}V${BASE}" stroke="#efe2e6"/>`);
[101, 1128].forEach(x => s += `<path d="M${x}.500 ${OY}V${BASE}" stroke="#7d7d7d"/>`);
s += `<path d="M1600 364.500H4000" stroke="#000" stroke-dasharray="3 2"/>`;

function candle(x, hi, lo, top, bot, c) {
  x = Math.round(x - .5);
  s += `<path d="M${x + .5} ${hi}V${lo}" stroke="#3c3c3c"/>`;
  if (c) s += `<rect x="${x - .5}" y="${Math.round(top) + .5}" width="2" height="${Math.max(1, Math.round(bot - top) - 1)}" fill="${c === "r" ? "#f00" : "#008000"}" stroke="#3c3c3c"/>`;
}

// x, high, low, body top, body bottom, colour (no body for a doji)
const night = `37 413 426 422 425 r;41 424 429;45 422 426;50 415 424 419 422 g;53 413 420 417 420 r;56 418 423;60 417 422;64 414 420 414 420 g;67 412 417;71 413 420 414 418 r;75 412 418 412 415 g;79 405 415 405 415 g;82 405 411 407 411 r;86 405 411 407 410 g;90 403 411 407 410 g;94 403 411 407 411 r;97 412 423 412 417 r;101 422 430 424 430 g;105 423 427 424 427 g;108 422 425;112 418 423 419 423 g;116 417 419;120 417 418;124 413 417 414 417 g;128 412 415;131 413 418 414 418 r;135 412 419 414 417 g;139 413 417;142 414 421 414 420 r;146 417 422 417 420 g;149 415 423 417 422 r;153 417 420 417 420 g;157 417 420 417 420 r;161 414 418;164 414 418 414 417 g;168 412 415 412 414 r;172 412 415 412 414 r;176 413 416;180 410 414;183 412 417 412 415 r;187 413 420 414 418 r;190 410 419 410 418 g;194 393 410 397 407 g;198 389 398 395 398 g;202 391 397;206 390 402 395 398 r;209 384 398 385 398 g;213 385 386;217 385 395 385 395 r;221 395 412 395 408 r;224 403 412 407 411 r;228 406 413 410 412 r;232 408 416 412 415 r;236 414 426 415 417 r;239 405 415 405 415 g;243 398 406 402 405 g;247 385 401 388 401 g;250 383 395 390 393 r;254 378 395 383 393 g;258 378 396 383 393 r;262 388 400 391 394 r;265 371 395 373 394 g;269 376 385 377 382 r;273 376 383 378 382 g;277 374 379;280 372 383;284 364 377 369 374 g;288 368 378 369 373 r;291 373 383 373 378 r;295 377 381 377 380 r;299 382 388 382 384 r;303 367 383 374 382 g;306 374 382 375 381 r;310 377 382 378 381 g;314 377 386 378 385 r;317 380 386 381 385 r;321 377 383;325 376 382 377 381 r;328 376 382;332 376 390 377 388 r;336 383 389 384 388 g;340 385 389 385 388 r;344 384 390 386 388 g;347 366 386 366 386 g;351 354 367 354 367 g;355 356 366 357 365 r;358 361 365 361 364 g;362 361 368 361 365 r;366 364 372 365 367 r;370 366 370;373 365 369;377 364 371 365 367 g`;
night.split(";").forEach(b => { const v = b.split(" "); candle(+v[0], +v[1], +v[2], +v[3], +v[4], v[5]); });

// Session bars, stored in thirds of a pixel from (380, 270)
const day = `0 282 310 284 300 r;10 297 308 298 306 r;22 305 318;34 288 325 290 305 g;46 284 292;56 282 298 284 290 g;67 275 290;79 260 290 275 284 g;91 240 290 247 284 g;100 232 268 238 248 r;112 232 258 247 254 r;124 218 250 222 248 g;133 212 236 217 234 r;145 224 244 231 238 r;157 217 246 223 233 g;169 210 235;178 210 254 223 254 r;190 224 248 238 248 g;202 238 268 238 268 r;211 210 268 210 268 g;223 202 216;235 210 245 217 233 r;247 202 320 223 305 r;256 276 325 298 310 r;268 303 340 304 320 r;280 318 348 319 334 r;292 304 355 325 340 g;301 320 360 325 356 r;313 335 370 340 355 g;325 248 345 260 340 g;334 240 275;346 225 260 238 260 g;358 180 238 223 238 g;370 202 275 232 254 r;379 232 275 247 260 g;391 218 268 238 254 g;403 136 290 175 247 g;412 115 205 130 182 g;424 78 152 130 152 r;436 151 935 151 838 r;448 826 955 847 883 r;457 795 905 797 877 g;469 672 815 760 796 g;481 715 832 766 832 r;493 780 865 832 862 r;502 753 868 755 862 g;514 730 790 760 767 r;526 692 802 724 775 g;535 672 732 694 710 g;547 688 760 694 730 r;559 706 780 724 730 g;571 724 898 724 826 r;580 826 888 826 878 r;592 766 878 766 868 g;604 744 838 775 790 r;613 760 790 775 790 g;625 781 852 781 847 r;637 826 890 838 883 r;649 838 888 847 883 g;658 847 920 847 913 r;670 883 955 889 905 g;682 880 950 898 934 r;694 863 970 868 940 g;703 868 925 868 889 r;715 838 920 862 883 g;727 826 913 853 913 r;736 898 975 913 955 r;748 904 962 949 961 g;760 925 1006 940 985 r;772 950 1006 976 991 r;781 985 1036 991 1006 r;793 970 1026 985 1006 g;805 955 990;814 949 991 949 991 g;826 949 1006 955 1006 r;838 1000 1042 1006 1021 r;850 949 1022 961 1021 g;859 961 1000 961 991 r;871 991 1026 991 1012 r;883 976 1018 991 1012 g;895 976 1012 991 1012 r;904 1012 1062;918 992 1036 992 1036 g;1854 185 220;1864 185 235 195 232 r;1876 222 290 230 270 r;1888 265 285;1900 248 270 258 270 g;1909 255 285 258 282 r`;
day.split(";").forEach(b => {
  const v = b.split(" ");
  const y = n => 270 + n / 3;
  candle(380 + v[0] / 3 + .5, y(v[1]), y(v[2]), y(v[3]), y(v[4]), v[5]);
});

s += `<path d="M${OX} ${BASE}.5H4000" stroke="#44444e"/>`;
gridX.forEach((x, i) => {
  s += `<path d="M${x}.500 ${BASE}v6" stroke="#000"/>`;
  if (times[i]) s += `<text x="${x - 5}" y="727" text-anchor="middle">${times[i]}</text>`;
});
document.getElementById("plot").innerHTML = s + "</g>";

let a = `<g transform="translate(0 ${-OY})"><path d="M.5 ${OY}V${BASE + 1}" stroke="#44444e"/>`;
gridY.forEach((y, i) => {
  a += `<path d="M1 ${y}.5h6" stroke="#000"/>`;
  // the current-price tag stands in for the label it covers
  if (y !== 369) a += `<text x="8" y="${y + 5}">${(1.093 - i * .001).toFixed(5)}</text>`;
});
a += `<path d="M1 364.500l7-8h60v17H8z" fill="#000"/><text class="now" x="8" y="369">1.08710</text></g>`;
document.getElementById("axis").innerHTML = a;
```
